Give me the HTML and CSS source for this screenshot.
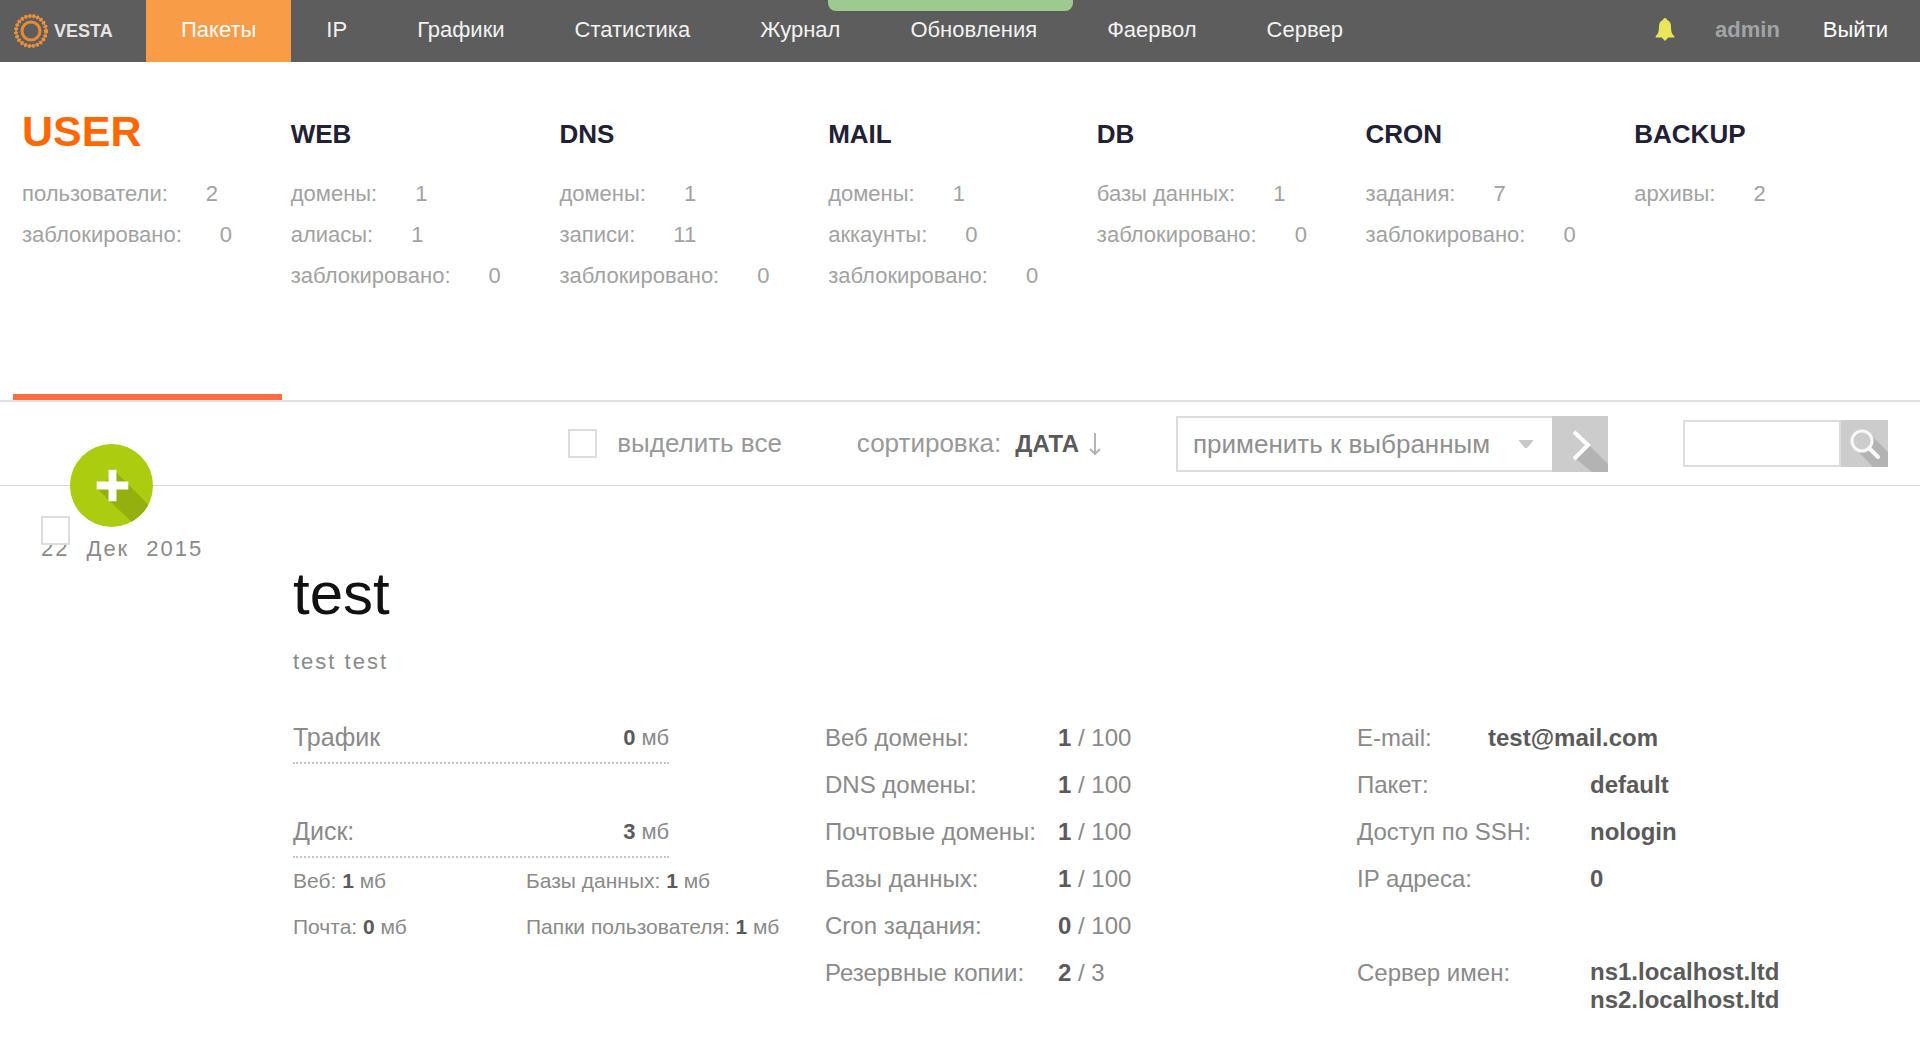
FILE: index.html
```html
<!DOCTYPE html>
<html lang="ru">
<head>
<meta charset="utf-8">
<title>Vesta - USER</title>
<meta name="viewport" content="width=device-width, initial-scale=1">
<link rel="stylesheet" href="styles.css">
</head>
<body>
<header class="topbar">
  <a class="logo" href="#">
    <svg class="logo-mark" viewBox="0 0 34 34" aria-hidden="true">
      <circle cx="17" cy="17" r="15" fill="none" stroke="#d5853f" stroke-width="2"/>
      <circle cx="17" cy="17" r="15" fill="none" stroke="#ee9440" stroke-width="4" stroke-dasharray="2 2"/>
      <circle cx="17" cy="17" r="9" fill="none" stroke="#e88a35" stroke-width="3"/>
    </svg>
    <span class="logo-name">VESTA</span>
  </a>
  <nav class="menu">
    <a class="menu-link menu-link-active" href="#">Пакеты</a>
    <a class="menu-link" href="#">IP</a>
    <a class="menu-link" href="#">Графики</a>
    <a class="menu-link" href="#">Статистика</a>
    <a class="menu-link" href="#">Журнал</a>
    <a class="menu-link" href="#">Обновления</a>
    <a class="menu-link" href="#">Фаервол</a>
    <a class="menu-link" href="#">Сервер</a>
  </nav>
  <div class="account">
    <button class="bell" type="button" aria-label="Уведомления">
      <svg viewBox="0 0 20 24" width="20" height="24" aria-hidden="true">
        <path d="M10 0c1.200 0 1.800.8 2 2 3 1.200 4 3.500 4 6.500 0 5 .8 7.500 3.300 9.500v1.500h-6L10 23l-3.300-3.500h-6V18C3.200 16 4 13.500 4 8.500 4 5.500 5 3.200 8 2c.2-1.200.8-2 2-2z" fill="#e9e65a"/>
      </svg>
    </button>
    <a class="account-user" href="#">admin</a>
    <a class="account-exit" href="#">Выйти</a>
  </div>
  <div class="notice"></div>
</header>

<main>
  <section class="stats">
    <div class="stat stat-active">
      <h2 class="stat-title"><a href="#">USER</a></h2>
      <ul class="stat-list"><li>пользователи:<span>2</span></li><li>заблокировано:<span>0</span></li></ul>
    </div>
    <div class="stat">
      <h2 class="stat-title"><a href="#">WEB</a></h2>
      <ul class="stat-list"><li>домены:<span>1</span></li><li>алиасы:<span>1</span></li><li>заблокировано:<span>0</span></li></ul>
    </div>
    <div class="stat">
      <h2 class="stat-title"><a href="#">DNS</a></h2>
      <ul class="stat-list"><li>домены:<span>1</span></li><li>записи:<span>11</span></li><li>заблокировано:<span>0</span></li></ul>
    </div>
    <div class="stat">
      <h2 class="stat-title"><a href="#">MAIL</a></h2>
      <ul class="stat-list"><li>домены:<span>1</span></li><li>аккаунты:<span>0</span></li><li>заблокировано:<span>0</span></li></ul>
    </div>
    <div class="stat">
      <h2 class="stat-title"><a href="#">DB</a></h2>
      <ul class="stat-list"><li>базы данных:<span>1</span></li><li>заблокировано:<span>0</span></li></ul>
    </div>
    <div class="stat">
      <h2 class="stat-title"><a href="#">CRON</a></h2>
      <ul class="stat-list"><li>задания:<span>7</span></li><li>заблокировано:<span>0</span></li></ul>
    </div>
    <div class="stat">
      <h2 class="stat-title"><a href="#">BACKUP</a></h2>
      <ul class="stat-list"><li>архивы:<span>2</span></li></ul>
    </div>
  </section>

  <form class="toolbar">
    <a class="add" href="#" aria-label="Добавить">
      <svg viewBox="0 0 84 84" width="83" height="83" aria-hidden="true">
        <defs><clipPath id="disc"><circle cx="42" cy="42" r="42"/></clipPath></defs>
        <circle cx="42" cy="42" r="42" fill="#abcc0f"/>
        <path d="M46 28l50 50-24 10-44-42z" fill="#94b00f" clip-path="url(#disc)"/>
        <path d="M39 26h8v12h12v8H47v12h-8V46H27v-8h12z" fill="#fff"/>
      </svg>
    </a>
    <label class="select-all"><input class="check" type="checkbox">выделить все</label>
    <div class="sort">сортировка:<button class="sort-key" type="button">ДАТА</button>
      <svg viewBox="0 0 12 24" width="12" height="24" aria-hidden="true"><path d="M6 1v20M1 17l5 5 5-5" fill="none" stroke="#b4b4b4" stroke-width="2"/></svg>
    </div>
    <div class="bulk">
      <div class="bulk-field">
        <select class="bulk-select" aria-label="применить к выбранным"><option>применить к выбранным</option></select>
        <svg class="bulk-caret" viewBox="0 0 14 8" width="14" height="8" aria-hidden="true"><path d="M0 0h14v1L8 8H6L0 1z" fill="#c8c8c8"/></svg>
      </div>
      <button class="bulk-apply" type="submit" aria-label="Применить">
        <svg viewBox="0 0 56 56" width="56" height="56" aria-hidden="true">
          <path d="M37 29l19 19v8H40L24 43z" fill="#b3b3b3"/>
          <path d="M22 16l14 13-14 14" fill="none" stroke="#fff" stroke-width="4"/>
        </svg>
      </button>
    </div>
    <div class="search">
      <input class="search-input" type="search" aria-label="Поиск">
      <button class="search-button" type="submit" aria-label="Найти">
        <svg viewBox="0 0 47 47" width="47" height="47" aria-hidden="true">
          <path d="M30 15l17 17v15H32L14 28z" fill="#b3b3b3"/>
          <circle cx="21" cy="21" r="10" fill="#ccc" stroke="#f8f8f8" stroke-width="3"/>
          <path d="M28 28l9 9" stroke="#f8f8f8" stroke-width="4" stroke-linecap="round"/>
        </svg>
      </button>
    </div>
  </form>

  <article class="unit">
    <div class="unit-side">
      <time class="unit-date" datetime="2015-12-22"><span>22</span><span>Дек</span><span>2015</span></time>
      <input class="check unit-check" type="checkbox" aria-label="test">
    </div>
    <div class="unit-main">
      <h1 class="unit-name">test</h1>
      <p class="unit-owner">test test</p>
      <div class="details">
        <div class="usage">
          <div class="usage-total usage-traffic"><span>Трафик</span><span class="amount"><b>0</b> мб</span></div>
          <div class="usage-total"><span>Диск:</span><span class="amount"><b>3</b> мб</span></div>
          <ul class="usage-parts">
            <li>Веб: <b>1</b> мб</li><li>Базы данных: <b>1</b> мб</li>
            <li>Почта: <b>0</b> мб</li><li>Папки пользователя: <b>1</b> мб</li>
          </ul>
        </div>
        <dl class="facts">
          <div class="fact"><dt>Веб домены:</dt><dd><b>1</b> / 100</dd></div>
          <div class="fact"><dt>DNS домены:</dt><dd><b>1</b> / 100</dd></div>
          <div class="fact"><dt>Почтовые домены:</dt><dd><b>1</b> / 100</dd></div>
          <div class="fact"><dt>Базы данных:</dt><dd><b>1</b> / 100</dd></div>
          <div class="fact"><dt>Cron задания:</dt><dd><b>0</b> / 100</dd></div>
          <div class="fact"><dt>Резервные копии:</dt><dd><b>2</b> / 3</dd></div>
        </dl>
        <dl class="facts">
          <div class="fact fact-mail"><dt>E-mail:</dt><dd><b>test@mail.com</b></dd></div>
          <div class="fact"><dt>Пакет:</dt><dd><b>default</b></dd></div>
          <div class="fact"><dt>Доступ по SSH:</dt><dd><b>nologin</b></dd></div>
          <div class="fact"><dt>IP адреса:</dt><dd><b>0</b></dd></div>
          <div class="fact fact-servers"><dt>Сервер имен:</dt><dd><b>ns1.localhost.ltd</b><b>ns2.localhost.ltd</b></dd></div>
        </dl>
      </div>
    </div>
  </article>
</main>
</body>
</html>
```
FILE: styles.css
```css
* { box-sizing: border-box; }

body {
  margin: 0;
  background: #fff;
  color: #8a8a8a;
  font-family: "Liberation Sans", Arial, sans-serif;
  font-size: 22px;
}

a { color: inherit; text-decoration: none; }
ul, dl, dd, h1, h2, p { margin: 0; padding: 0; }
ul { list-style: none; }
svg { display: block; }
b { color: #5a5a5a; }

button {
  margin: 0;
  padding: 0;
  border: 0;
  background: none;
  font: inherit;
  cursor: pointer;
}

/* Top bar */
.topbar {
  position: relative;
  display: flex;
  height: 62px;
  background: #5d5d5d;
  color: #f2f2f2;
  line-height: 60px;
}

.logo {
  display: flex;
  align-items: center;
  gap: 6px;
  width: 146px;
  padding-left: 14px;
}

.logo-mark { width: 34px; height: 34px; }

.logo-name {
  color: #e4e4e4;
  font-size: 18px;
  font-weight: bold;
}

.menu { display: flex; }
.menu-link { padding: 0 35px; }
.menu-link-active { background: #f89c47; color: #fff; }

.account {
  display: flex;
  height: 60px;
  align-items: center;
  margin-left: auto;
  padding-right: 32px;
}

.bell { margin-right: 40px; }
.account-user { margin-right: 43px; color: #9fa5a6; font-weight: bold; }
.account-exit { color: #fff; }

.notice {
  position: absolute;
  top: 0;
  left: 828px;
  width: 245px;
  height: 11px;
  border-radius: 0 0 8px 8px;
  background: #9eca8f;
}

/* Section counters */
.stats {
  display: grid;
  grid-template-columns: repeat(7, 1fr);
  padding: 0 26px 0 13px;
}

.stat { padding: 42px 0 98px 9px; border-bottom: 6px solid transparent; }
.stat-active { border-color: #ff6c40; }

.stat-title {
  margin-bottom: 9px;
  color: #222035;
  font-size: 26px;
  line-height: 60px;
}

.stat-active .stat-title {
  margin-bottom: 15px;
  color: #ff6701;
  font-size: 43px;
  line-height: 54px;
}

.stat-list { color: #a2a2a2; line-height: 41px; white-space: nowrap; }
.stat-list span { margin-left: 38px; }

/* Toolbar */
.toolbar {
  position: relative;
  display: flex;
  align-items: center;
  justify-content: flex-end;
  gap: 75px;
  height: 86px;
  padding-right: 32px;
  border-top: 2px solid #e0e0e0;
  border-bottom: 1px solid #d8d8d8;
  color: #999;
  font-size: 26px;
}

.add { position: absolute; top: 42px; left: 70px; border-radius: 50%; }

.check {
  width: 29px;
  height: 29px;
  margin: 0;
  border: 2px solid #ddd;
  background: #fff;
  appearance: none;
}

.select-all { display: flex; align-items: center; gap: 20px; }
.sort { display: flex; align-items: center; }
.sort-key { margin: 0 10px 0 14px; color: #5a5a5a; font-size: 24px; font-weight: bold; }

.bulk { display: flex; }
.bulk-field { position: relative; }

.bulk-select {
  width: 376px;
  height: 56px;
  padding: 0 15px;
  border: 2px solid #ddd;
  border-right: 0;
  border-radius: 0;
  background: #fff;
  color: #909090;
  font: inherit;
  appearance: none;
}

.bulk-caret { position: absolute; top: 24px; right: 19px; pointer-events: none; }
.bulk-apply, .search-button { background: #ccc; }

.search { display: flex; }

.search-input {
  width: 158px;
  height: 47px;
  padding: 0 10px;
  border: 2px solid #ddd;
  border-radius: 0;
  background: #fff;
  font: inherit;
  appearance: none;
}

/* User entry */
.unit { display: flex; }
.unit-side { position: relative; flex: 0 0 293px; padding: 48px 0 0 41px; }

.unit-date {
  display: flex;
  gap: 17px;
  letter-spacing: 2px;
  line-height: 30px;
}

.unit-check { position: absolute; top: 30px; left: 41px; }

.unit-main { flex: 1; padding: 73px 31px 0 0; }

.unit-name {
  color: #111;
  font-size: 60px;
  font-weight: normal;
  line-height: 70px;
}

.unit-owner { margin: 18px 0 37px; letter-spacing: 2px; line-height: 30px; }

.details {
  display: grid;
  grid-template-columns: repeat(3, 1fr);
  font-size: 24px;
  line-height: 47px;
}

.usage-total {
  display: flex;
  justify-content: space-between;
  width: 376px;
  padding-bottom: 1px;
  border-bottom: 2px dotted #c4c4c4;
  font-size: 25px;
}

.usage-traffic { margin-bottom: 44px; }
.amount { font-size: 22px; }

.usage-parts {
  display: grid;
  grid-template-columns: 233px 1fr;
  font-size: 21px;
  line-height: 46px;
  white-space: nowrap;
}

.fact { display: grid; grid-template-columns: 233px 1fr; }
.fact-mail { grid-template-columns: 131px 1fr; }
.fact-servers { margin-top: 47px; }
.fact-servers dd { padding: 9px 0; line-height: 28px; }
.fact-servers b { display: block; }
```
